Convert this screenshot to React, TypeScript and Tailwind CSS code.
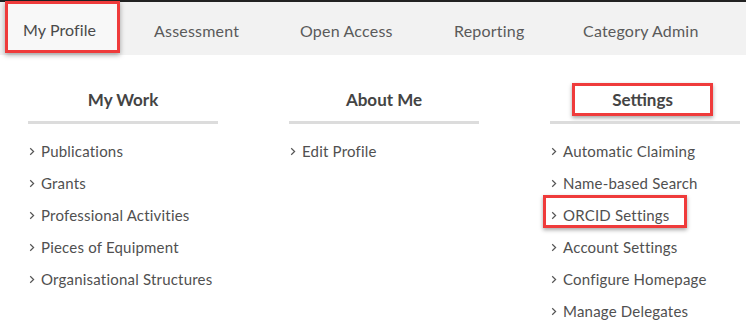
import React from "react";

const Chevron = () => (
  <svg width="6" height="9" viewBox="0 0 6 9" className="shrink-0">
    <path d="M1.2 1.2 L4.6 4.5 L1.2 7.8" fill="none" stroke="#555" strokeWidth="1.2" />
  </svg>
);

type Item = { label: string; boxed?: boolean };

const Column = ({ title, items, boxedTitle }: { title: string; items: Item[]; boxedTitle?: boolean }) => (
  <div className="w-[190px] flex flex-col">
    {boxedTitle ? (
      <div className="ml-[22px] w-[141px] h-[33px] border-[3px] border-[#ef3b3b] shadow-[0_2px_4px_rgba(0,0,0,0.35)] flex items-center justify-center bg-white">
        <span className="text-[17px] font-bold text-[#444]">{title}</span>
      </div>
    ) : (
      <div className="h-[33px] flex items-center justify-center">
        <span className="text-[17px] font-bold text-[#444]">{title}</span>
      </div>
    )}
    <div className="mt-[5px] h-[3px] bg-[#dcdcdc]" />
    <ul className="mt-[11px] flex flex-col">
      {items.map((it) => (
        <li key={it.label} className="relative h-[32px] flex items-center">
          {it.boxed && (
            <div className="absolute left-[-7px] top-[-4px] w-[144px] h-[33px] border-[3px] border-[#ef3b3b] shadow-[0_2px_4px_rgba(0,0,0,0.35)]" />
          )}
          <span className="ml-[1px] w-[12px] flex items-center">
            <Chevron />
          </span>
          <span className="text-[15px] tracking-[0.2px] text-[#505050]">{it.label}</span>
        </li>
      ))}
    </ul>
  </div>
);

export default function App() {
  const navItems = [
    { label: "Assessment", w: "w-[146px]" },
    { label: "Open Access", w: "w-[154px]" },
    { label: "Reporting", w: "w-[129px]" },
    { label: "Category Admin", w: "w-[150px]" },
  ];
  return (
    <div className="w-[746px] h-[334px] bg-white overflow-hidden" style={{ fontFamily: "Lato, 'Open Sans', sans-serif" }}>
      <div className="border-t-2 border-[#222] bg-[#f2f2f2] h-[55px] flex items-start">
        <div className="ml-[5px] -mt-[1px] w-[115px] h-[52px] border-[3px] border-[#ef3b3b] bg-[#f8f8f8] shadow-[0_2px_5px_rgba(0,0,0,0.35)] flex items-center pl-[15px] pt-[6px]">
          <span className="text-[16px] tracking-[0.1px] text-[#4a4a4a]">My Profile</span>
        </div>
        <div className="ml-[34px] flex h-[52px] items-center pt-[5px]">
          {navItems.map((n) => (
            <div key={n.label} className={`${n.w} text-[16px] tracking-[0.2px] text-[#5a5a5a]`}>
              {n.label}
            </div>
          ))}
        </div>
      </div>
      <div className="pl-[28px] pt-[28px] flex gap-[71px]">
        <Column
          title="My Work"
          items={[
            { label: "Publications" },
            { label: "Grants" },
            { label: "Professional Activities" },
            { label: "Pieces of Equipment" },
            { label: "Organisational Structures" },
          ]}
        />
        <Column title="About Me" items={[{ label: "Edit Profile" }]} />
        <Column
          title="Settings"
          boxedTitle
          items={[
            { label: "Automatic Claiming" },
            { label: "Name-based Search" },
            { label: "ORCID Settings", boxed: true },
            { label: "Account Settings" },
            { label: "Configure Homepage" },
            { label: "Manage Delegates" },
          ]}
        />
      </div>
    </div>
  );
}
